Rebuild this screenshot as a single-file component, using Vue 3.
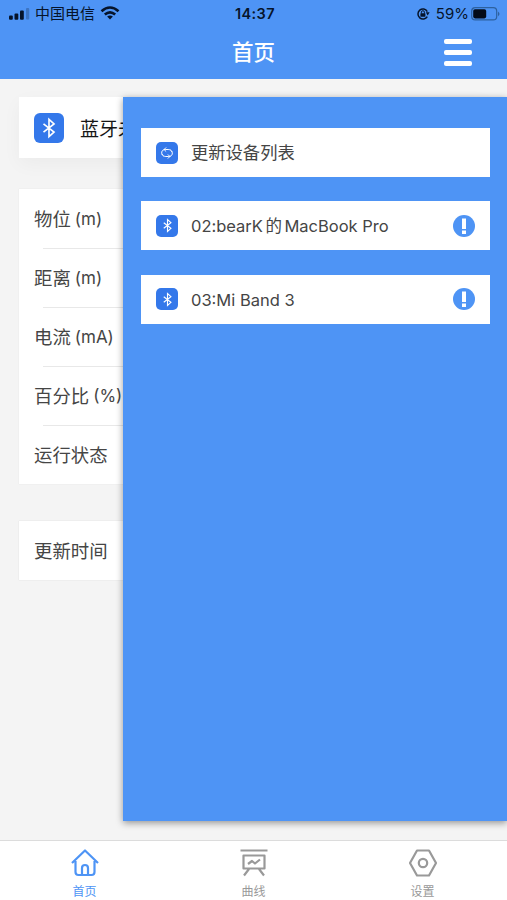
<script setup>
const readings = [
  { name: '物位', unit: '(m)' },
  { name: '距离', unit: '(m)' },
  { name: '电流', unit: '(mA)' },
  { name: '百分比', unit: '(%)' },
  { name: '运行状态', unit: '' },
]
const bluetooth = 'M6 7.5 17.5 16.5 12 21.500V2.500l5.500 5L6 16.5'
</script>

<template>
  <div class="screen">
    <header class="header">
      <div class="status">
        <div class="carrier">
          <svg class="signal" width="21" height="12" viewBox="0 0 21 12">
            <rect x="0" y="7.5" width="3.8" height="4.200" rx="1" />
            <rect x="5.5" y="5.5" width="3.8" height="6.200" rx="1" />
            <rect x="11" y="2.500" width="3.8" height="9.200" rx="1" />
            <rect x="17" y="0" width="3.2" height="11.5" rx="1" opacity=".25" />
          </svg>
          <span class="operator">中国电信</span>
          <svg class="wifi" width="20" height="14" viewBox="0 0 20 14" fill="none" stroke="#06142b" stroke-width="2.6">
            <path d="M1.5 5.2Q10-2.2 18.5 5.2M4.8 8.5Q10 4.1 15.2 8.5" />
            <path d="M7.1 10.5Q10 8.4 12.9 10.5L10 13.5Z" fill="#06142b" stroke="none" />
          </svg>
        </div>
        <span class="time">14:37</span>
        <div class="power">
          <svg width="14" height="14" viewBox="0 0 14 14">
            <path d="M11.300 4.500A5 5 0 1 0 11.300 9.500" fill="none" stroke="#06142b" stroke-width="1.5" />
            <path d="M9.800 5.300h3.800l-1.900 3.200z" fill="#06142b" />
            <rect x="4.400" y="6.2" width="5" height="3.6" rx=".6" fill="#06142b" />
            <path d="M5.400 6.5V5.2a1.5 1.5 0 0 1 3 0v1.3" fill="none" stroke="#06142b" />
          </svg>
          <span class="percent">59%</span>
          <svg width="30" height="14" viewBox="0 0 30 14">
            <rect x=".7" y=".7" width="25" height="12.2" rx="3.5" fill="none" stroke="#2d619f" stroke-width="1.2" />
            <rect x="2.2" y="2.2" width="13" height="9.2" rx="1.8" fill="#030b18" />
            <path d="M27 4.4q3 2.400 0 4.800z" fill="#2d619f" />
          </svg>
        </div>
      </div>
      <div class="titlebar">
        <h1>首页</h1>
        <div class="menu"><i></i><i></i><i></i></div>
      </div>
    </header>

    <main class="content">
      <section class="card connection">
        <span class="badge large">
          <svg viewBox="0 0 24 24"><path :d="bluetooth" /></svg>
        </span>
        <span class="label">蓝牙未连接</span>
      </section>
      <section class="card readings">
        <div v-for="r in readings" :key="r.name" class="row">
          <span>{{ r.name }}</span><span class="unit">{{ r.unit }}</span>
        </div>
      </section>
      <section class="card updated"><div class="row">更新时间</div></section>
    </main>

    <aside class="drawer">
      <div class="device">
        <span class="badge">
          <svg viewBox="0 0 24 24" class="refresh">
            <path d="M6 17C1 14 2 6 9 6h5c3 0 5.500 1.500 6.500 4M10.500 2.500 7 6l3.500 3.500M18 7c5 3 4 11-3 11h-5c-3 0-5.500-1.500-6.500-4M13.500 14.500 17 18l-3.500 3.500" />
          </svg>
        </span>
        <span class="name zh">更新设备列表</span>
      </div>
      <div class="device">
        <span class="badge"><svg viewBox="0 0 24 24"><path :d="bluetooth" /></svg></span>
        <span class="name">02:bearK<span class="de">的</span>MacBook Pro</span>
        <svg class="alert" viewBox="0 0 22 22"><circle cx="11" cy="11" r="11" /><path d="M9 3.500h4V14H9zM9 15.500h4V19H9z" /></svg>
      </div>
      <div class="device">
        <span class="badge"><svg viewBox="0 0 24 24"><path :d="bluetooth" /></svg></span>
        <span class="name">03:Mi Band 3</span>
        <svg class="alert" viewBox="0 0 22 22"><circle cx="11" cy="11" r="11" /><path d="M9 3.500h4V14H9zM9 15.500h4V19H9z" /></svg>
      </div>
    </aside>

    <nav class="tabs">
      <div class="tab active">
        <svg viewBox="0 0 28 28">
          <path d="M1 14 14 1.500 27 14M4.500 12v11q0 3 3 3h13q3 0 3-3V12M11 26v-7a3 3 0 0 1 6 0v7" />
        </svg>
        <span>首页</span>
      </div>
      <div class="tab">
        <svg viewBox="0 0 28 28">
          <path d="M.5 1.500h27M3.500 6.500h21v13h-21zM9 20l-5 6.500M19 20l5 6.500M8 15l4-3 3 2.500 5-4" />
        </svg>
        <span>曲线</span>
      </div>
      <div class="tab">
        <svg viewBox="0 0 28 28">
          <path d="M8 1.500h12l7 12.500-7 12.500H8L1 14z" /><circle cx="14" cy="14" r="4.200" />
        </svg>
        <span>设置</span>
      </div>
    </nav>
  </div>
</template>

<style>
body { background: #f4f4f4; }
</style>

<style scoped>
* { box-sizing: border-box; }
.screen {
  position: relative;
  display: flex;
  flex-direction: column;
  width: 507px;
  height: 900px;
  overflow: hidden;
  background: #f4f4f4;
  color: #454545;
  font-family: Inter, "Noto Sans CJK SC", sans-serif;
}
svg { display: block; flex: none; }
.header { height: 79px; background: #4e94f5; flex: none; }
.status {
  display: grid;
  grid-template-columns: 1fr auto 1fr;
  align-items: center;
  height: 27px;
  padding: 0 6px 0 9px;
  color: #06142b;
}
.carrier, .power { display: flex; align-items: center; }
.signal { fill: #06142b; }
.operator { margin: 0 5px; font-size: 15px; line-height: 20px; }
.wifi { margin-bottom: 1px; }
.time { font-size: 14.500px; font-weight: 600; letter-spacing: .4px; }
.power { justify-content: flex-end; }
.percent { margin: 0 2px 0 6px; font-size: 15px; }
.titlebar { position: relative; height: 52px; }
h1 {
  margin: 0;
  color: #fff;
  font-size: 21.500px;
  font-weight: 500;
  line-height: 51px;
  text-align: center;
}
.menu { position: absolute; top: 12px; right: 35px; display: grid; gap: 6px; }
.menu i { width: 28px; height: 5px; border-radius: 2px; background: #fff; }
.content { flex: 1; padding: 18px 19px 0; }
.card { background: #fff; }
.connection {
  display: flex;
  align-items: center;
  gap: 16px;
  height: 61px;
  padding-left: 15px;
  color: #161616;
  font-size: 19px;
  box-shadow: 0 6px 18px rgba(0, 0, 0, .04);
}
.label { padding-bottom: 1px; }
.badge {
  display: grid;
  flex: none;
  width: 22px;
  height: 22px;
  place-items: center;
  border-radius: 5px;
  background: #3478ea;
}
.badge svg { width: 15px; height: 15px; fill: none; stroke: #fff; stroke-width: 1.8; }
.badge.large { width: 30px; height: 30px; border-radius: 6px; }
.badge.large svg { width: 22px; height: 22px; }
.badge .refresh { width: 14px; height: 14px; stroke-width: 1.7; }
.readings { margin-top: 31px; box-shadow: 0 0 1px #ddd; }
.row {
  position: relative;
  display: flex;
  align-items: center;
  height: 59px;
  padding: 0 0 2px 15px;
  font-size: 18.400px;
}
.row + .row::before {
  position: absolute;
  top: 0;
  right: 0;
  left: 24px;
  height: 1px;
  background: #e8e8e8;
  content: "";
}
.unit { margin-left: 4px; padding-top: 2px; font-size: 17px; }
.updated { margin-top: 37px; box-shadow: 0 0 1px #ccc; }
.drawer {
  position: absolute;
  top: 97px;
  right: 0;
  display: flex;
  flex-direction: column;
  gap: 24.300px;
  width: 384px;
  height: 724px;
  padding: 31px 17px 0 18px;
  background: #4e94f5;
  box-shadow: 0 2px 7px rgba(0, 0, 0, .4);
}
.device {
  display: flex;
  align-items: center;
  height: 49px;
  padding: 0 15px;
  background: #fff;
}
.name { flex: 1; margin-left: 13px; padding-top: 1px; font-size: 16.500px; line-height: 24px; white-space: nowrap; }
.zh { font-size: 17.300px; }
.de { margin: 0 2.500px; }
.alert { width: 22px; height: 22px; fill: #4e94f5; }
.alert path { fill: #fff; }
.tabs {
  display: grid;
  grid-template-columns: repeat(3, 1fr);
  flex: none;
  height: 60px;
  border-top: 1px solid #dcdcdc;
  background: #fff;
}
.tab { display: flex; flex-direction: column; align-items: center; padding-top: 8px; color: #999; font-size: 12px; line-height: 16px; }
.tab svg { width: 28px; height: 28px; fill: none; stroke: currentColor; stroke-width: 2.2; stroke-linejoin: round; }
.tab span { margin-top: 7px; }
.active { color: #4e94f5; }
</style>
